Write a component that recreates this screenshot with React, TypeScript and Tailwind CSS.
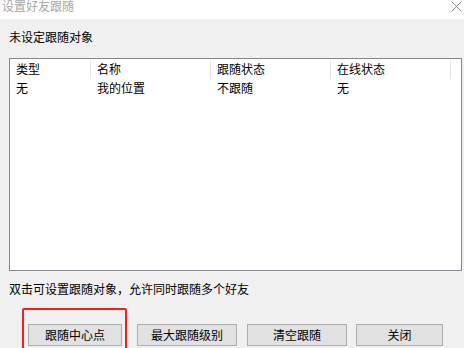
import React from "react";

const font = { fontFamily: '"Noto Sans CJK SC", "Noto Sans", sans-serif' };

function Btn({ label, w, ml }: { label: string; w: string; ml: string }) {
  return (
    <div
      className={`${w} ${ml} h-[22px] bg-[#e1e1e1] border border-[#adadad] flex items-center justify-center text-[12px] leading-none text-black`}
    >
      {label}
    </div>
  );
}

export default function App() {
  const cols = [
    { w: "w-[81px]", h: "类型", v: "无" },
    { w: "w-[120px]", h: "名称", v: "我的位置" },
    { w: "w-[120px]", h: "跟随状态", v: "不跟随" },
    { w: "w-[120px]", h: "在线状态", v: "无" },
  ];
  return (
    <div className="relative w-[464px] h-[348px] overflow-hidden bg-[#f0f0f0]" style={font}>
      {/* title bar */}
      <div className="h-[19px] bg-white flex items-start justify-between">
        <div className="pl-[2px] -mt-[3px] text-[12px] leading-[18px] text-[#a6a6a6]">设置好友跟随</div>
        <svg width="11" height="11" viewBox="0 0 11 11" className="mt-[1px] mr-[2px]">
          <path d="M0.5 0.5 L10.5 10.5 M10.5 0.5 L0.5 10.5" stroke="#8a8a8a" strokeWidth="1" fill="none" />
        </svg>
      </div>
      <div className="pl-[9px] flex flex-col">
        <div className="mt-[10px] h-[16px] leading-[16px] text-[12px] text-black">未设定跟随对象</div>
        <div className="mt-[13px] w-[453px] h-[213px] bg-white border border-[#828790] flex flex-col">
          <div className="flex h-[20px]">
            {cols.map((c, i) => (
              <div
                key={i}
                className={`${c.w} h-[20px] pl-[6px] text-[12px] leading-[20px] text-black border-r border-[#e5e5e5]`}
              >
                {c.h}
              </div>
            ))}
          </div>
          <div className="flex h-[17px]">
            {cols.map((c, i) => (
              <div key={i} className={`${c.w} pl-[6px] text-[12px] leading-[17px] text-black`}>
                {c.v}
              </div>
            ))}
          </div>
        </div>
        <div className="mt-[10px] h-[16px] leading-[16px] text-[12px] text-black">
          双击可设置跟随对象，允许同时跟随多个好友
        </div>
        <div className="mt-[27px] flex">
          <Btn label="跟随中心点" w="w-[94px]" ml="ml-[19px]" />
          <Btn label="最大跟随级别" w="w-[100px]" ml="ml-[15px]" />
          <Btn label="清空跟随" w="w-[100px]" ml="ml-[10px]" />
          <Btn label="关闭" w="w-[87px]" ml="ml-[9px]" />
        </div>
      </div>
      {/* red annotation box */}
      <div className="absolute left-[22px] top-[308px] w-[105px] h-[60px] border-2 border-[#ff1a1a] rounded-[2px]" />
    </div>
  );
}
